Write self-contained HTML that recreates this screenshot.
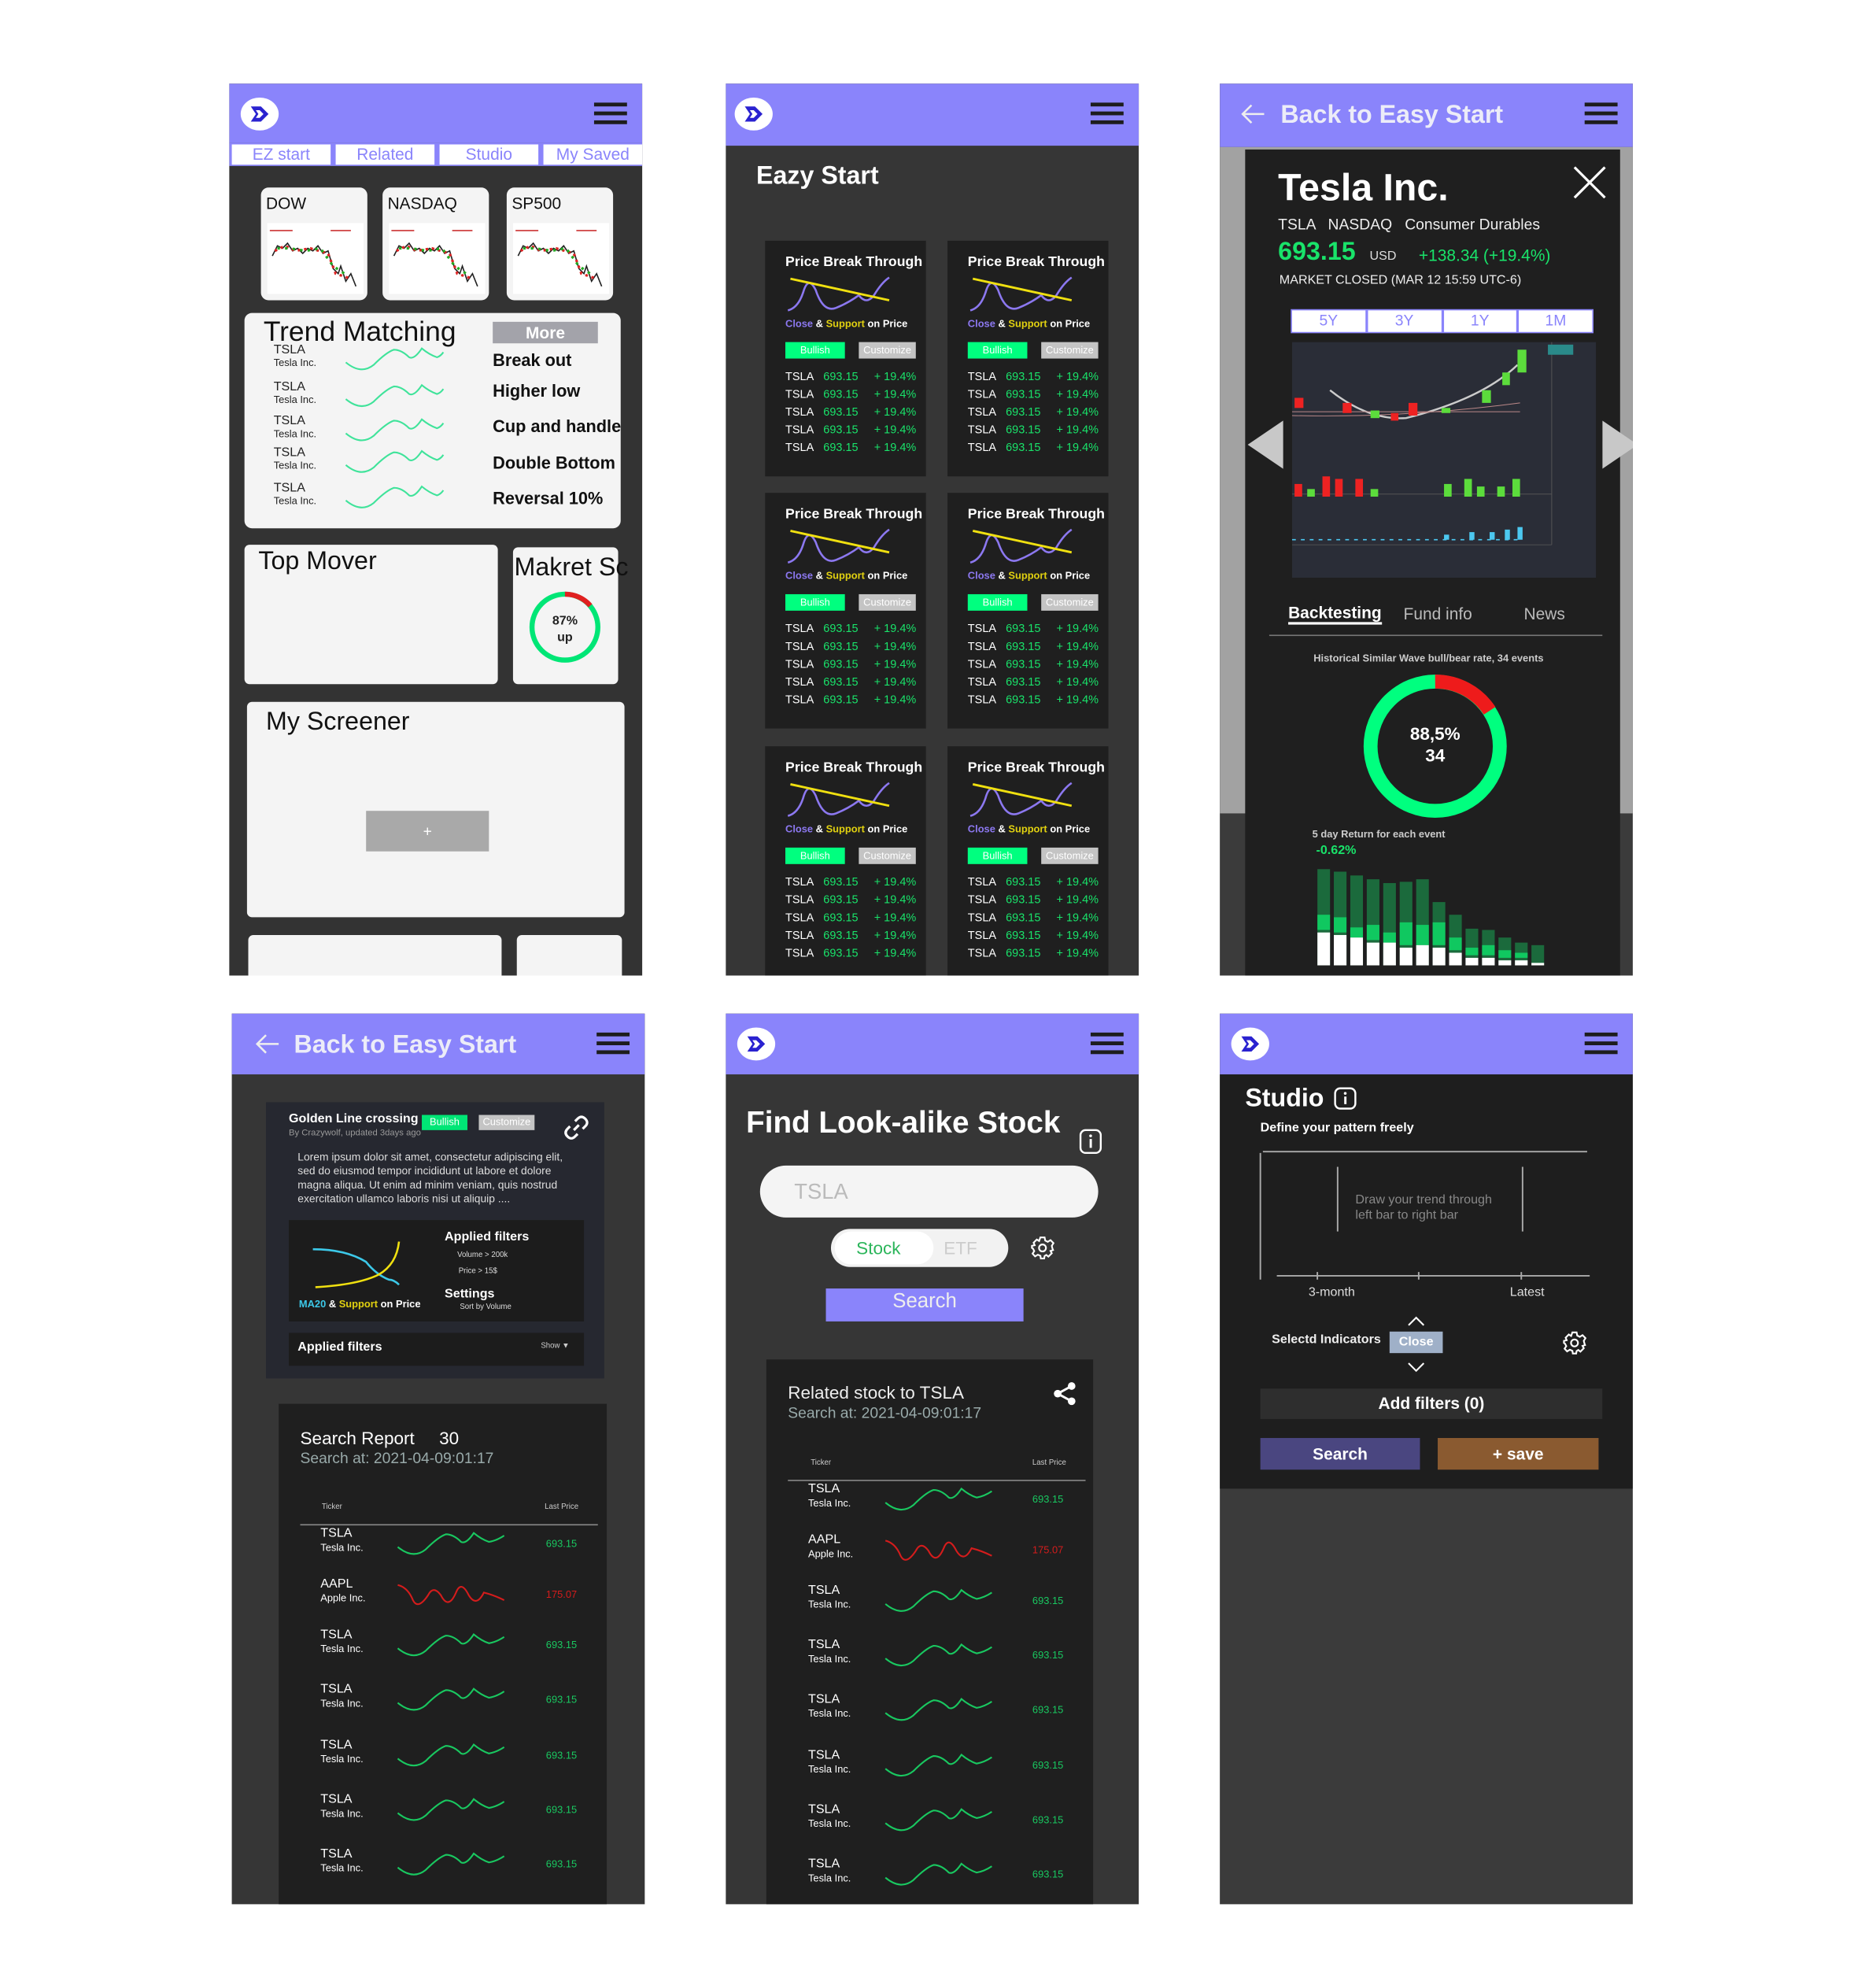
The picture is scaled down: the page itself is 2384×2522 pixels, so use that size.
<!DOCTYPE html>
<html><head><meta charset="utf-8">
<style>
html,body{margin:0;padding:0;background:#fff;width:2384px;height:2522px;overflow:hidden}
#w{position:absolute;left:0;top:0;width:1481px;height:1567px;transform:scale(1.6097);transform-origin:0 0;font-family:"Liberation Sans",sans-serif}
.a{position:absolute}
.scr{position:absolute;overflow:hidden;width:326px;height:704px}
.hd{position:absolute;left:0;top:0;width:326px;height:48px;background:#8a84fb}
.ham{position:absolute;right:12px;top:15px;width:26px;height:18px}
.ham i{display:block;height:3px;background:#1d1d1d;margin-bottom:4px}
.logo{position:absolute;left:8px;top:10px}
.t{position:absolute;white-space:nowrap}
.pc{position:absolute;width:127px;height:186px;background:#1f1f1f}
.pc .t{color:#fff}
.g{color:#19e36a!important}
</style></head><body><div id="w">

<!-- ============ SCREEN 1 ============ -->
<div class="scr" style="left:181px;top:66px;background:#333">
 <div class="hd" style="height:47px"></div>
 <svg class="logo" width="32" height="28" viewBox="0 0 32 28"><ellipse cx="16" cy="14" rx="15" ry="13" fill="#fff"/><path d="M9,8 L17,8 L23,14 L17,20 L9,20 L13,14 Z M13,11 L15,14 L13,17 L16,17 L19,14 L16,11 Z" fill="#2a22d0"/></svg>
 <div class="ham"><i></i><i></i><i></i></div>
 <div class="a" style="left:0;top:47px;width:326px;height:18px;background:#8a84fb"></div>
 <div class="t" style="left:2px;top:48px;width:78px;height:16px;background:#fff;color:#8a84fb;font-size:13px;text-align:center;line-height:16px">EZ start</div>
 <div class="t" style="left:84px;top:48px;width:78px;height:16px;background:#fff;color:#8a84fb;font-size:13px;text-align:center;line-height:16px">Related</div>
 <div class="t" style="left:166px;top:48px;width:78px;height:16px;background:#fff;color:#8a84fb;font-size:13px;text-align:center;line-height:16px">Studio</div>
 <div class="t" style="left:248px;top:48px;width:78px;height:16px;background:#fff;color:#8a84fb;font-size:13px;text-align:center;line-height:16px">My Saved</div>

 <div class="a" style="left:25px;top:82px;width:84px;height:89px;background:#f4f4f4;border-radius:6px"></div>
 <div class="a" style="left:121px;top:82px;width:84px;height:89px;background:#f4f4f4;border-radius:6px"></div>
 <div class="a" style="left:219px;top:82px;width:84px;height:89px;background:#f4f4f4;border-radius:6px"></div>
 <div class="t" style="left:29px;top:87px;font-size:13px;color:#111">DOW</div>
 <div class="t" style="left:125px;top:87px;font-size:13px;color:#111">NASDAQ</div>
 <div class="t" style="left:223px;top:87px;font-size:13px;color:#111">SP500</div>
 <svg class="a" style="left:30px;top:110px" width="76" height="56" viewBox="0 0 76 56"><rect width="76" height="56" fill="#fff"/><path d="M2,6 H20 M50,6 H66" stroke="#c33" stroke-width="1"/><polyline points="4,26 8,18 12,20 16,16 20,22 24,20 28,24 32,20 36,22 40,18 44,24 48,22 52,36 56,40 58,34 62,46 66,40 70,50" fill="none" stroke="#222" stroke-width="1"/><polyline points="6,22 14,18 22,22 34,20 48,24 54,40 60,42 66,44" fill="none" stroke="#d22" stroke-width="2" stroke-dasharray="2 3"/><polyline points="8,20 18,20 30,22 42,20 52,34 58,38 64,42" fill="none" stroke="#2a2" stroke-width="2" stroke-dasharray="2 4"/></svg>
 <svg class="a" style="left:126px;top:110px" width="76" height="56" viewBox="0 0 76 56"><rect width="76" height="56" fill="#fff"/><path d="M2,6 H20 M50,6 H66" stroke="#c33" stroke-width="1"/><polyline points="4,26 8,18 12,20 16,16 20,22 24,20 28,24 32,20 36,22 40,18 44,24 48,22 52,36 56,40 58,34 62,46 66,40 70,50" fill="none" stroke="#222" stroke-width="1"/><polyline points="6,22 14,18 22,22 34,20 48,24 54,40 60,42 66,44" fill="none" stroke="#d22" stroke-width="2" stroke-dasharray="2 3"/><polyline points="8,20 18,20 30,22 42,20 52,34 58,38 64,42" fill="none" stroke="#2a2" stroke-width="2" stroke-dasharray="2 4"/></svg>
 <svg class="a" style="left:224px;top:110px" width="76" height="56" viewBox="0 0 76 56"><rect width="76" height="56" fill="#fff"/><path d="M2,6 H20 M50,6 H66" stroke="#c33" stroke-width="1"/><polyline points="4,26 8,18 12,20 16,16 20,22 24,20 28,24 32,20 36,22 40,18 44,24 48,22 52,36 56,40 58,34 62,46 66,40 70,50" fill="none" stroke="#222" stroke-width="1"/><polyline points="6,22 14,18 22,22 34,20 48,24 54,40 60,42 66,44" fill="none" stroke="#d22" stroke-width="2" stroke-dasharray="2 3"/><polyline points="8,20 18,20 30,22 42,20 52,34 58,38 64,42" fill="none" stroke="#2a2" stroke-width="2" stroke-dasharray="2 4"/></svg>

 <div class="a" style="left:12px;top:181px;width:297px;height:170px;background:#f4f4f4;border-radius:6px"></div>
 <div class="t" style="left:27px;top:183px;font-size:22px;color:#111">Trend Matching</div>
 <div class="t" style="left:208px;top:188px;width:83px;height:17px;background:#a3a3aa;color:#fff;font-size:13px;font-weight:bold;text-align:center;line-height:17px">More</div>
 <div class="a" style="left:35px;top:206px;font-size:10px;line-height:10px;color:#222">TSLA<br><span style="font-size:8px">Tesla Inc.</span></div>
 <div class="a" style="left:35px;top:235px;font-size:10px;line-height:10px;color:#222">TSLA<br><span style="font-size:8px">Tesla Inc.</span></div>
 <div class="a" style="left:35px;top:262px;font-size:10px;line-height:10px;color:#222">TSLA<br><span style="font-size:8px">Tesla Inc.</span></div>
 <div class="a" style="left:35px;top:287px;font-size:10px;line-height:10px;color:#222">TSLA<br><span style="font-size:8px">Tesla Inc.</span></div>
 <div class="a" style="left:35px;top:315px;font-size:10px;line-height:10px;color:#222">TSLA<br><span style="font-size:8px">Tesla Inc.</span></div>
 <svg class="a" style="left:90px;top:206px" width="80" height="140" viewBox="0 0 80 140" fill="none" stroke="#3fe39a" stroke-width="1.3"><g id="tw"><path d="M2,14 Q14,24 24,16 Q34,6 40,4 Q46,4 52,10 Q56,12 62,3 Q68,8 74,10 Q77,9 79,6"/></g><use href="#tw" y="29"/><use href="#tw" y="56"/><use href="#tw" y="81"/><use href="#tw" y="109"/></svg>
 <div class="t" style="left:208px;top:211px;font-size:13.5px;font-weight:bold;color:#111">Break out</div>
 <div class="t" style="left:208px;top:235px;font-size:13.5px;font-weight:bold;color:#111">Higher low</div>
 <div class="t" style="left:208px;top:263px;font-size:13.5px;font-weight:bold;color:#111">Cup and handle</div>
 <div class="t" style="left:208px;top:292px;font-size:13.5px;font-weight:bold;color:#111">Double Bottom</div>
 <div class="t" style="left:208px;top:320px;font-size:13.5px;font-weight:bold;color:#111">Reversal 10%</div>

 <div class="a" style="left:12px;top:364px;width:200px;height:110px;background:#f4f4f4;border-radius:4px"></div>
 <div class="t" style="left:23px;top:366px;font-size:20px;color:#111">Top Mover</div>
 <div class="a" style="left:224px;top:366px;width:83px;height:108px;background:#f4f4f4;border-radius:4px"></div>
 <div class="t" style="left:225px;top:371px;font-size:20px;color:#111">Makret Sc</div>
 <svg class="a" style="left:236px;top:400px" width="58" height="58" viewBox="0 0 58 58"><circle cx="29" cy="29" r="26" fill="none" stroke="#00e676" stroke-width="4"/><path d="M29,3 A26,26 0 0 1 49,12" fill="none" stroke="#e02020" stroke-width="4"/><text x="29" y="27" font-size="10" font-weight="bold" text-anchor="middle" fill="#222" font-family="Liberation Sans">87%</text><text x="29" y="40" font-size="10" font-weight="bold" text-anchor="middle" fill="#222" font-family="Liberation Sans">up</text></svg>

 <div class="a" style="left:14px;top:488px;width:298px;height:170px;background:#f4f4f4;border-radius:4px"></div>
 <div class="t" style="left:29px;top:493px;font-size:20px;color:#111">My Screener</div>
 <div class="t" style="left:108px;top:574px;width:97px;height:32px;background:#a9a9a9;color:#fff;font-size:12px;text-align:center;line-height:32px">+</div>
 <div class="a" style="left:15px;top:672px;width:200px;height:40px;background:#f4f4f4;border-radius:4px"></div>
 <div class="a" style="left:227px;top:672px;width:83px;height:40px;background:#f4f4f4;border-radius:4px"></div>
</div>

<!-- ============ SCREEN 2 ============ -->
<div class="scr" style="left:573px;top:66px;background:#363636">
 <div class="hd" style="height:49px"></div>
 <svg class="logo" style="left:6px" width="32" height="28" viewBox="0 0 32 28"><ellipse cx="16" cy="14" rx="15" ry="13" fill="#fff"/><path d="M9,8 L17,8 L23,14 L17,20 L9,20 L13,14 Z M13,11 L15,14 L13,17 L16,17 L19,14 L16,11 Z" fill="#2a22d0"/></svg>
 <div class="ham"><i></i><i></i><i></i></div>
 <div class="t" style="left:24px;top:62px;font-size:20px;font-weight:bold;color:#fff">Eazy Start</div>
</div>
<div id="pcs"></div>

<!-- ============ SCREEN 3 ============ -->
<div class="scr" style="left:963px;top:66px;background:#3b3b3b">
 <div class="a" style="left:0;top:50px;width:326px;height:526px;background:#a2a2a2"></div>
 <div class="hd" style="height:50px"></div>
 <svg class="a" style="left:16px;top:16px" width="20" height="16" viewBox="0 0 20 16" fill="none" stroke="#eee" stroke-width="1.6"><path d="M19,8 H2 M9,1 L2,8 L9,15"/></svg>
 <div class="t" style="left:48px;top:14px;font-size:20px;font-weight:bold;color:#ececf8">Back to Easy Start</div>
 <div class="ham"><i></i><i></i><i></i></div>
 <div class="a" style="left:20px;top:52px;width:296px;height:660px;background:#1f1f1f"></div>
 <svg class="a" style="left:22px;top:266px" width="30" height="40"><path d="M28,0 V38 L0,19 Z" fill="#c8c8c8"/></svg>
 <svg class="a" style="left:302px;top:266px" width="30" height="40"><path d="M0,0 V38 L28,19 Z" fill="#c8c8c8"/></svg>
 <div class="t" style="left:46px;top:66px;font-size:30px;font-weight:bold;color:#fff">Tesla Inc.</div>
 <svg class="a" style="left:279px;top:65px" width="26" height="26" stroke="#fff" stroke-width="2"><path d="M1,1 L25,25 M25,1 L1,25"/></svg>
 <div class="t" style="left:46px;top:104px;font-size:12px;color:#eee">TSLA &nbsp; NASDAQ &nbsp; Consumer Durables</div>
 <div class="t" style="left:46px;top:122px;font-size:20px;font-weight:bold;color:#19e36a">693.15 <span style="font-size:10px;color:#ddd;font-weight:normal">&nbsp; USD</span></div>
 <div class="t" style="left:157px;top:128px;font-size:13px;color:#19e36a">+138.34 (+19.4%)</div>
 <div class="t" style="left:47px;top:150px;font-size:10px;color:#eee">MARKET CLOSED (MAR 12 15:59 UTC-6)</div>
 <div class="a" style="left:56px;top:178px;width:239px;height:19px;background:#8a84fb;display:flex;gap:2px;padding:1px;box-sizing:border-box">
  <div style="flex:1;background:#fff;color:#8a84fb;font-size:12px;text-align:center;line-height:17px">5Y</div><div style="flex:1;background:#fff;color:#8a84fb;font-size:12px;text-align:center;line-height:17px">3Y</div><div style="flex:1;background:#fff;color:#8a84fb;font-size:12px;text-align:center;line-height:17px">1Y</div><div style="flex:1;background:#fff;color:#8a84fb;font-size:12px;text-align:center;line-height:17px">1M</div></div>
 <svg class="a" style="left:57px;top:204px" width="240" height="186" viewBox="0 0 240 186"><rect width="240" height="186" fill="#2a2d37"/><path d="M0,120 H205 M0,160 H205 M205,0 V160" stroke="#555" stroke-width="0.6"/><path d="M30,38 Q60,62 90,60 Q150,45 178,18" fill="none" stroke="#ccc" stroke-width="1.5"/><path d="M0,55 H180 M0,58 Q90,60 180,48" stroke="#b88" stroke-width="0.6" fill="none"/><g fill="#e22"><rect x="2" y="44" width="7" height="8"/><rect x="40" y="48" width="7" height="8"/><rect x="92" y="48" width="7" height="10"/><rect x="78" y="56" width="6" height="6"/></g><g fill="#5cdc3c"><rect x="62" y="54" width="7" height="6"/><rect x="118" y="52" width="7" height="4"/><rect x="150" y="38" width="7" height="10"/><rect x="166" y="24" width="6" height="10"/><rect x="178" y="6" width="7" height="18"/></g><rect x="202" y="2" width="20" height="8" fill="#2a8a8a"/><g fill="#e22"><rect x="2" y="112" width="6" height="10"/><rect x="24" y="106" width="6" height="16"/><rect x="34" y="108" width="6" height="14"/><rect x="50" y="108" width="6" height="14"/></g><g fill="#5cdc3c"><rect x="12" y="116" width="6" height="6"/><rect x="62" y="116" width="6" height="6"/><rect x="120" y="112" width="6" height="10"/><rect x="136" y="108" width="6" height="14"/><rect x="146" y="114" width="6" height="8"/><rect x="162" y="114" width="6" height="8"/><rect x="174" y="108" width="6" height="14"/></g><g fill="#4cc8f0"><rect x="120" y="152" width="4" height="4"/><rect x="140" y="150" width="4" height="6"/><rect x="156" y="150" width="4" height="6"/><rect x="168" y="148" width="4" height="8"/><rect x="178" y="146" width="4" height="10"/></g><path d="M0,156 H180" stroke="#4cc8f0" stroke-dasharray="3 4"/></svg>
 <div class="t" style="left:54px;top:410px;font-size:13px;font-weight:bold;color:#fff;border-bottom:2px solid #fff">Backtesting</div>
 <div class="t" style="left:145px;top:411px;font-size:13px;color:#bbb">Fund info</div>
 <div class="t" style="left:240px;top:411px;font-size:13px;color:#bbb">News</div>
 <div class="a" style="left:39px;top:435px;width:263px;height:1px;background:#777"></div>
 <div class="t" style="left:74px;top:449px;font-size:8px;font-weight:bold;color:#ccc">Historical Similar Wave bull/bear rate, 34 events</div>
 <svg class="a" style="left:108px;top:461px" width="124" height="124" viewBox="0 0 124 124"><circle cx="62" cy="62" r="51" fill="none" stroke="#00ff7f" stroke-width="11"/><path d="M62,11 A51,51 0 0 1 105,34" fill="none" stroke="#ee1b1b" stroke-width="11"/><text x="62" y="57" text-anchor="middle" font-size="14" font-weight="bold" fill="#fff" font-family="Liberation Sans">88,5%</text><text x="62" y="74" text-anchor="middle" font-size="14" font-weight="bold" fill="#fff" font-family="Liberation Sans">34</text></svg>
 <div class="t" style="left:73px;top:588px;font-size:8px;font-weight:bold;color:#ccc">5 day Return for each event</div>
 <div class="t" style="left:76px;top:600px;font-size:10px;font-weight:bold;color:#19e36a">-0.62%</div>
 <svg class="a" style="left:77px;top:614px" width="186" height="82" viewBox="0 0 186 82">
 <g fill="#1b6a3c"><rect x="0" y="6" width="10" height="76"/><rect x="13" y="8" width="10" height="74"/><rect x="26" y="11" width="10" height="71"/><rect x="39" y="14" width="10" height="68"/><rect x="52" y="17" width="10" height="65"/><rect x="65" y="16" width="10" height="66"/><rect x="78" y="14" width="10" height="68"/><rect x="91" y="32" width="10" height="50"/><rect x="104" y="42" width="10" height="40"/><rect x="117" y="53" width="10" height="29"/><rect x="130" y="54" width="10" height="28"/><rect x="143" y="60" width="10" height="22"/><rect x="156" y="64" width="10" height="18"/><rect x="169" y="66" width="10" height="16"/></g>
 <g fill="#10c860"><rect x="0" y="42" width="10" height="12"/><rect x="13" y="44" width="10" height="12"/><rect x="26" y="52" width="10" height="8"/><rect x="39" y="50" width="10" height="12"/><rect x="52" y="56" width="10" height="8"/><rect x="65" y="48" width="10" height="18"/><rect x="78" y="50" width="10" height="16"/><rect x="91" y="48" width="10" height="18"/><rect x="104" y="60" width="10" height="10"/><rect x="117" y="68" width="10" height="6"/><rect x="130" y="66" width="10" height="8"/><rect x="143" y="70" width="10" height="6"/><rect x="156" y="72" width="10" height="4"/></g>
 <g fill="#fff"><rect x="0" y="56" width="10" height="26"/><rect x="13" y="58" width="10" height="24"/><rect x="26" y="60" width="10" height="22"/><rect x="39" y="64" width="10" height="18"/><rect x="52" y="64" width="10" height="18"/><rect x="65" y="68" width="10" height="14"/><rect x="78" y="66" width="10" height="16"/><rect x="91" y="68" width="10" height="14"/><rect x="104" y="72" width="10" height="10"/><rect x="117" y="76" width="10" height="6"/><rect x="130" y="76" width="10" height="6"/><rect x="143" y="78" width="10" height="4"/><rect x="156" y="78" width="10" height="4"/><rect x="169" y="80" width="10" height="2"/></g></svg>
</div>

<!-- ============ SCREEN 4 ============ -->
<div class="scr" style="left:183px;top:800px;background:#363636;height:703px">
 <div class="hd"></div>
 <svg class="a" style="left:18px;top:16px" width="20" height="16" viewBox="0 0 20 16" fill="none" stroke="#eee" stroke-width="1.6"><path d="M19,8 H2 M9,1 L2,8 L9,15"/></svg>
 <div class="t" style="left:49px;top:14px;font-size:20px;font-weight:bold;color:#ececf8">Back to Easy Start</div>
 <div class="ham"><i></i><i></i><i></i></div>
 <div class="a" style="left:27px;top:70px;width:267px;height:218px;background:#262830"></div>
 <div class="t" style="left:45px;top:78px;font-size:10px;font-weight:bold;color:#fff">Golden Line crossing</div>
 <div class="t" style="left:150px;top:80px;width:36px;height:12px;background:#00e676;color:#fff;font-size:8px;text-align:center;line-height:12px">Bullish</div>
 <div class="t" style="left:195px;top:80px;width:44px;height:12px;background:#c4c4c4;color:#fff;font-size:8px;text-align:center;line-height:12px">Customize</div>
 <svg class="a" style="left:262px;top:80px" width="20" height="20" viewBox="0 0 20 20" fill="none" stroke="#fff" stroke-width="2"><path d="M8,12 L12,8 M9,5 L11,3 Q14,0 17,3 Q20,6 17,9 L15,11 M11,15 L9,17 Q6,20 3,17 Q0,14 3,11 L5,9"/></svg>
 <div class="t" style="left:45px;top:91px;font-size:7px;color:#999">By Crazywolf, updated 3days ago</div>
 <div class="a" style="left:52px;top:108px;width:225px;font-size:8.6px;line-height:11px;color:#ddd">Lorem ipsum dolor sit amet, consectetur adipiscing elit, sed do eiusmod tempor incididunt ut labore et dolore magna aliqua. Ut enim ad minim veniam, quis nostrud exercitation ullamco laboris nisi ut aliquip ....</div>
 <div class="a" style="left:45px;top:163px;width:233px;height:80px;background:#1c1c1c"></div>
 <svg class="a" style="left:60px;top:172px" width="80" height="50"><path d="M4,14 Q30,14 46,24 Q54,34 64,38 Q68,38 72,42" fill="none" stroke="#3cc8e8" stroke-width="1.6"/><path d="M6,44 Q40,42 56,34 Q70,26 72,8" fill="none" stroke="#f0e010" stroke-width="1.6"/></svg>
 <div class="t" style="left:53px;top:225px;font-size:8px;font-weight:bold;color:#fff"><span style="color:#3cc8e8">MA20</span> &amp; <span style="color:#e0d010">Support</span> on Price</div>
 <div class="t" style="left:168px;top:171px;font-size:10px;font-weight:bold;color:#fff">Applied filters</div>
 <div class="t" style="left:178px;top:188px;font-size:6px;color:#ddd">Volume &gt; 200k</div>
 <div class="t" style="left:179px;top:201px;font-size:6px;color:#ddd">Price &gt; 15$</div>
 <div class="t" style="left:168px;top:216px;font-size:10px;font-weight:bold;color:#fff">Settings</div>
 <div class="t" style="left:180px;top:229px;font-size:6px;color:#ddd">Sort by Volume</div>
 <div class="a" style="left:45px;top:252px;width:233px;height:26px;background:#1c1c1c"></div>
 <div class="t" style="left:52px;top:258px;font-size:10px;font-weight:bold;color:#fff">Applied filters</div>
 <div class="t" style="left:244px;top:260px;font-size:6px;color:#ccc">Show ▼</div>
 <div class="a" style="left:37px;top:308px;width:259px;height:400px;background:#1f1f1f"></div>
 <div class="t" style="left:54px;top:327px;font-size:14px;color:#fff">Search Report &nbsp;&nbsp;&nbsp; 30</div>
 <div class="t" style="left:54px;top:344px;font-size:12px;color:#9aa">Search at: 2021-04-09:01:17</div>
 <div class="t" style="left:71px;top:387px;font-size:6px;color:#ccc">Ticker</div>
 <div class="t" style="left:247px;top:387px;font-size:6px;color:#ccc">Last Price</div>
 <div class="a" style="left:54px;top:403px;width:235px;height:1px;background:#888"></div>
</div>
<div id="rows4"></div>

<!-- ============ SCREEN 5 ============ -->
<div class="scr" style="left:573px;top:800px;background:#363636;height:703px">
 <div class="hd"></div>
 <svg class="logo" style="left:8px;top:10px" width="32" height="28" viewBox="0 0 32 28"><ellipse cx="16" cy="14" rx="15" ry="13" fill="#fff"/><path d="M9,8 L17,8 L23,14 L17,20 L9,20 L13,14 Z M13,11 L15,14 L13,17 L16,17 L19,14 L16,11 Z" fill="#2a22d0"/></svg>
 <div class="ham"><i></i><i></i><i></i></div>
 <div class="t" style="left:16px;top:73px;font-size:24px;font-weight:bold;color:#fff">Find Look-alike Stock</div>
 <svg class="a" style="left:279px;top:91px" width="18" height="20"><rect x="1" y="1" width="16" height="18" rx="4" fill="none" stroke="#fff" stroke-width="1.5"/><rect x="8.2" y="8" width="1.8" height="7" fill="#fff"/><circle cx="9" cy="5.5" r="1.1" fill="#fff"/></svg>
 <div class="a" style="left:27px;top:120px;width:267px;height:41px;background:#f4f4f4;border-radius:21px"></div>
 <div class="t" style="left:54px;top:131px;font-size:17px;color:#bbb">TSLA</div>
 <div class="a" style="left:83px;top:170px;width:140px;height:30px;background:#f2f2f2;border-radius:15px"></div>
 <div class="a" style="left:86px;top:172px;width:78px;height:26px;background:#fff;border-radius:13px"></div>
 <div class="t" style="left:103px;top:177px;font-size:14px;color:#2bb55a">Stock</div>
 <div class="t" style="left:172px;top:177px;font-size:14px;color:#ccc">ETF</div>
 <svg class="a" style="left:240px;top:175px" width="20" height="20" viewBox="0 0 24 24" fill="none" stroke="#fff" stroke-width="1.6"><path d="M10,2 H14 L14.6,5 L17,6.2 L19.6,4.6 L22.4,7.4 L20.8,10 L21.4,12.4 L22,14 L19.6,14.8 L20.8,17 L17.6,20.2 L15.6,18.6 L14,19.6 L13.6,22 H10.4 L10,19.4 L7.6,18.4 L5,20 L2.6,17.4 L4.2,15 L3,12.6 L2,12 V10 L4.6,9.4 L3.6,7 L6.6,4 L8.8,5.4 Z"/><circle cx="12" cy="12" r="3.3"/></svg>
 <div class="t" style="left:79px;top:217px;width:156px;height:26px;background:#8a84fb;color:#eee;font-size:16px;text-align:center;line-height:22px">Search</div>
 <div class="a" style="left:32px;top:273px;width:258px;height:440px;background:#1f1f1f"></div>
 <div class="t" style="left:49px;top:291px;font-size:14px;color:#eee">Related stock to TSLA</div>
 <div class="t" style="left:49px;top:308px;font-size:12px;color:#9aa">Search at: 2021-04-09:01:17</div>
 <svg class="a" style="left:258px;top:290px" width="20" height="20" viewBox="0 0 20 20"><circle cx="15" cy="4" r="3" fill="#fff"/><circle cx="4" cy="10" r="3" fill="#fff"/><circle cx="15" cy="16" r="3" fill="#fff"/><path d="M4,10 L15,4 M4,10 L15,16" stroke="#fff" stroke-width="1.8"/></svg>
 <div class="t" style="left:67px;top:352px;font-size:6px;color:#ccc">Ticker</div>
 <div class="t" style="left:242px;top:352px;font-size:6px;color:#ccc">Last Price</div>
 <div class="a" style="left:49px;top:368px;width:235px;height:1px;background:#888"></div>
</div>
<div id="rows5"></div>

<!-- ============ SCREEN 6 ============ -->
<div class="scr" style="left:963px;top:800px;background:#3b3b3b;height:703px">
 <div class="a" style="left:0;top:48px;width:326px;height:327px;background:#1e1e1e"></div>
 <div class="hd"></div>
 <svg class="logo" style="left:8px;top:10px" width="32" height="28" viewBox="0 0 32 28"><ellipse cx="16" cy="14" rx="15" ry="13" fill="#fff"/><path d="M9,8 L17,8 L23,14 L17,20 L9,20 L13,14 Z M13,11 L15,14 L13,17 L16,17 L19,14 L16,11 Z" fill="#2a22d0"/></svg>
 <div class="ham"><i></i><i></i><i></i></div>
 <div class="t" style="left:20px;top:56px;font-size:20px;font-weight:bold;color:#fff">Studio</div>
 <svg class="a" style="left:90px;top:58px" width="18" height="18"><rect x="1" y="1" width="16" height="16" rx="4" fill="none" stroke="#fff" stroke-width="1.5"/><rect x="8.2" y="7.5" width="1.8" height="6" fill="#fff"/><circle cx="9" cy="5" r="1.1" fill="#fff"/></svg>
 <div class="t" style="left:32px;top:85px;font-size:10px;font-weight:bold;color:#fff">Define your pattern freely</div>
 <svg class="a" style="left:30px;top:106px" width="265" height="110" fill="none" stroke="#aaa" stroke-width="1.2"><path d="M4,3 H260 M2,4 V104 M63,15 V66 M209,15 V66 M15,101 H262 M47,98 V104 M127,98 V104 M208,98 V104"/></svg>
 <div class="a" style="left:107px;top:142px;font-size:10px;line-height:12px;color:#888">Draw your trend through<br>left bar to right bar</div>
 <div class="t" style="left:70px;top:215px;font-size:10px;color:#ddd">3-month</div>
 <div class="t" style="left:229px;top:215px;font-size:10px;color:#ddd">Latest</div>
 <svg class="a" style="left:148px;top:237px" width="14" height="48" fill="none" stroke="#fff" stroke-width="1.3"><path d="M1,9 L7,3 L13,9 M1,39 L7,45 L13,39"/></svg>
 <div class="t" style="left:41px;top:252px;font-size:10px;font-weight:bold;color:#eee">Selectd Indicators</div>
 <div class="t" style="left:134px;top:251px;width:42px;height:17px;background:#9fb0c8;color:#fff;font-size:10px;font-weight:bold;text-align:center;line-height:17px">Close</div>
 <svg class="a" style="left:270px;top:250px" width="20" height="20" viewBox="0 0 24 24" fill="none" stroke="#fff" stroke-width="1.6"><path d="M10,2 H14 L14.6,5 L17,6.2 L19.6,4.6 L22.4,7.4 L20.8,10 L21.4,12.4 L22,14 L19.6,14.8 L20.8,17 L17.6,20.2 L15.6,18.6 L14,19.6 L13.6,22 H10.4 L10,19.4 L7.6,18.4 L5,20 L2.6,17.4 L4.2,15 L3,12.6 L2,12 V10 L4.6,9.4 L3.6,7 L6.6,4 L8.8,5.4 Z"/><circle cx="12" cy="12" r="3.3"/></svg>
 <div class="t" style="left:32px;top:296px;width:270px;height:24px;background:#2e2e2e;color:#fff;font-size:13px;font-weight:bold;text-align:center;line-height:24px">Add filters (0)</div>
 <div class="t" style="left:32px;top:335px;width:126px;height:25px;background:#4a4680;color:#fff;font-size:13px;font-weight:bold;text-align:center;line-height:25px">Search</div>
 <div class="t" style="left:172px;top:335px;width:127px;height:25px;background:#8a5a30;color:#fff;font-size:13px;font-weight:bold;text-align:center;line-height:25px">+ save</div>
</div>

<svg width="0" height="0" style="position:absolute"><defs>
<path id="gw" d="M2,14 Q14,24 24,16 Q34,6 40,4 Q46,4 52,10 Q56,12 62,3 Q68,8 74,10 Q80,9 86,5" fill="none" stroke="#19c860" stroke-width="1.3"/>
<path id="rw" d="M2,4 Q10,6 14,16 Q18,24 26,12 Q30,4 36,12 Q42,24 48,10 Q52,0 58,12 Q64,22 70,10 Q78,12 86,16" fill="none" stroke="#d41c1c" stroke-width="1.3"/>
</defs></svg>

<script>
(function(){
 var h='';var xs=[604,748],ys=[190,389,589];
 var rows='';for(var i=0;i<5;i++){var y=102+i*14;rows+='<div class="t" style="left:16px;top:'+y+'px;font-size:9px">TSLA</div><div class="t g" style="left:46px;top:'+y+'px;font-size:9px">693.15</div><div class="t g" style="left:86px;top:'+y+'px;font-size:9px">+ 19.4%</div>';}
 ys.forEach(function(y){xs.forEach(function(x){
  var hh=(y==589)?181:186;
  h+='<div class="pc" style="left:'+x+'px;top:'+y+'px;height:'+hh+'px;overflow:hidden">'+
  '<div class="t" style="left:16px;top:11px;font-size:11px;font-weight:bold">Price Break Through</div>'+
  '<svg class="a" style="left:16px;top:27px" width="86" height="32"><path d="M2,28 Q10,26 14,14 Q18,0 24,12 Q30,30 40,26 Q50,22 58,16 Q64,24 70,16 Q76,6 82,2" fill="none" stroke="#8c78f0" stroke-width="1.6"/><path d="M4,3 L82,20" stroke="#f0e010" stroke-width="1.8"/></svg>'+
  '<div class="t" style="left:16px;top:61px;font-size:8px;font-weight:bold"><span style="color:#8c78f0">Close</span> &amp; <span style="color:#e0d010">Support</span> on Price</div>'+
  '<div class="t" style="left:16px;top:80px;width:47px;height:13px;background:#00ff7f;font-size:8px;text-align:center;line-height:13px">Bullish</div>'+
  '<div class="t" style="left:74px;top:80px;width:45px;height:13px;background:#c4c4c4;font-size:8px;text-align:center;line-height:13px">Customize</div>'+rows+'</div>';
 });});
 document.getElementById('pcs').innerHTML=h;
 function mk(el,ys,tx,wx,px){var s='';ys.forEach(function(y,i){var red=(i==1);
  s+='<div class="a" style="left:'+tx+'px;top:'+y+'px;font-size:10px;line-height:11px;color:#fff">'+(red?'AAPL':'TSLA')+'<br><span style="font-size:8px">'+(red?'Apple Inc.':'Tesla Inc.')+'</span></div>'+
  '<svg class="a" style="left:'+wx+'px;top:'+(y+2)+'px" width="90" height="28"><use href="#'+(red?'rw':'gw')+'"/></svg>'+
  '<div class="t" style="left:'+px+'px;top:'+(y+9)+'px;font-size:8px;color:'+(red?'#d41c1c':'#19c860')+'">'+(red?'175.07':'693.15')+'</div>';});
  document.getElementById(el).innerHTML=s;}
 mk('rows4',[1205,1245,1285,1328,1372,1415,1458],253,312,431);
 mk('rows5',[1170,1210,1250,1293,1336,1380,1423,1466],638,697,815);
})();
</script>
</div></body></html>
